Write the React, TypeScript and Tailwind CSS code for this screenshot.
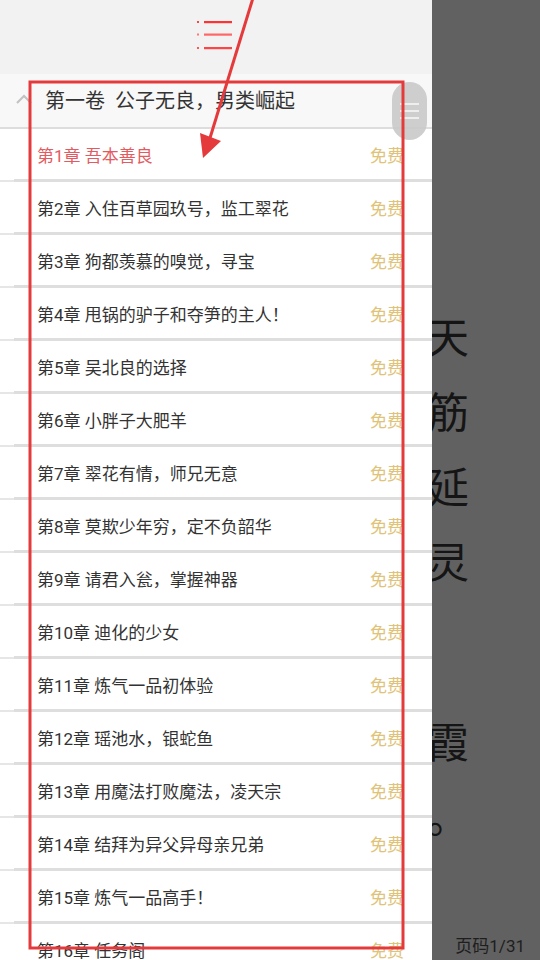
import React from "react";

const chapters: string[] = [
  "第1章 吾本善良",
  "第2章 入住百草园玖号，监工翠花",
  "第3章 狗都羡慕的嗅觉，寻宝",
  "第4章 甩锅的驴子和夺笋的主人！",
  "第5章 吴北良的选择",
  "第6章 小胖子大肥羊",
  "第7章 翠花有情，师兄无意",
  "第8章 莫欺少年穷，定不负韶华",
  "第9章 请君入瓮，掌握神器",
  "第10章 迪化的少女",
  "第11章 炼气一品初体验",
  "第12章 瑶池水，银蛇鱼",
  "第13章 用魔法打败魔法，凌天宗",
  "第14章 结拜为异父异母亲兄弟",
  "第15章 炼气一品高手！",
  "第16章 任务阁",
];

const readingLines: { ch: string; h: number }[] = [
  { ch: "", h: 297 },
  { ch: "天", h: 75 },
  { ch: "筋", h: 75 },
  { ch: "延", h: 75 },
  { ch: "灵", h: 75 },
  { ch: "", h: 105 },
  { ch: "霞", h: 75 },
  { ch: "。", h: 75 },
];

function Divider() {
  return (
    <div className="flex h-[3px] w-full items-end">
      <div className="h-[2px] w-[14px] bg-[#e6e6e6]" />
      <div className="h-[3px] flex-1 bg-[#dedede]" />
    </div>
  );
}

export default function App() {
  return (
    <div
      className="relative flex h-[960px] w-[540px] overflow-hidden bg-[#616161]"
      style={{ fontFamily: 'Roboto, "Noto Sans CJK SC", "Noto Sans", sans-serif' }}
    >
      {/* Drawer */}
      <div className="relative flex h-full w-[432px] shrink-0 flex-col overflow-hidden bg-white">
        <div className="flex h-[74px] shrink-0 items-center justify-center bg-[#f2f2f2]">
          <svg width="40" height="34" viewBox="0 0 40 34" className="ml-[-1px] mt-[-2px]">
            <rect x="1" y="2" width="2" height="2" fill="#f44" />
            <rect x="8" y="2" width="28" height="2.2" fill="#f33" />
            <rect x="1" y="14.5" width="2" height="2" fill="#f77" />
            <rect x="8" y="14.5" width="28" height="2.2" fill="#f66" />
            <rect x="1" y="28" width="2" height="2" fill="#f55" />
            <rect x="8" y="28" width="28" height="2.2" fill="#f44" />
          </svg>
        </div>
        <div className="flex h-[53px] shrink-0 items-center bg-[#f8f8f8]">
          <svg width="18" height="12" viewBox="0 0 18 12" className="ml-[16px] mt-[-4px]">
            <polyline points="1,10 8,3 15,10" fill="none" stroke="#c2c2c2" strokeWidth="2" />
          </svg>
          <span className="ml-[11px] text-[20px] leading-none text-[#333]">第一卷&nbsp;&nbsp;公子无良，男类崛起</span>
        </div>
        <div className="h-[2px] shrink-0 bg-[#dddddd]" />
        {chapters.map((c, i) => (
          <div key={i} className="shrink-0">
            <div className="flex h-[50px] items-center justify-between pl-[37px] pr-[28px] pt-[4px]">
              <span className={`text-[17px] leading-none ${i === 0 ? "text-[#e35a60]" : "text-[#333]"}`}>{c}</span>
              <span className="text-[17px] leading-none text-[#e0c37b]">免费</span>
            </div>
            <Divider />
          </div>
        ))}
        {/* scroll handle */}
        <div className="absolute left-[392px] top-[82px] flex h-[58px] w-[35px] flex-col items-center justify-center gap-[5px] rounded-full bg-[#c9c9c9]/90">
          <div className="h-[2px] w-[19px] bg-[#eeeeee]" />
          <div className="h-[2px] w-[19px] bg-[#eeeeee]" />
          <div className="h-[2px] w-[19px] bg-[#eeeeee]" />
        </div>
      </div>

      {/* Reading page behind (dimmed) */}
      <div className="flex h-full flex-1 flex-col overflow-hidden">
        {readingLines.map((l, i) => (
          <div
            key={i}
            className="flex shrink-0 items-center text-[42px] leading-none text-[#151515]"
            style={{ height: l.h }}
          >
            <span className="ml-[-5px]" style={{ fontFamily: '"Noto Sans CJK SC", sans-serif' }}>{l.ch}</span>
          </div>
        ))}
        <div className="mt-auto flex justify-end pb-[5px] pr-[15px]">
          <span className="text-[17px] leading-none text-[#1e1e1e]">页码1/31</span>
        </div>
      </div>

      {/* Annotation overlay */}
      <svg
        className="pointer-events-none absolute left-0 top-0"
        width="540"
        height="960"
        viewBox="0 0 540 960"
      >
        <rect x="30" y="82" width="373" height="866" fill="none" stroke="#e53a3c" strokeWidth="3" />
        <line x1="253" y1="-2" x2="210" y2="138" stroke="#e53a3c" strokeWidth="3" />
        <polygon points="200,133 221,141 203,158" fill="#e53a3c" />
      </svg>
    </div>
  );
}
